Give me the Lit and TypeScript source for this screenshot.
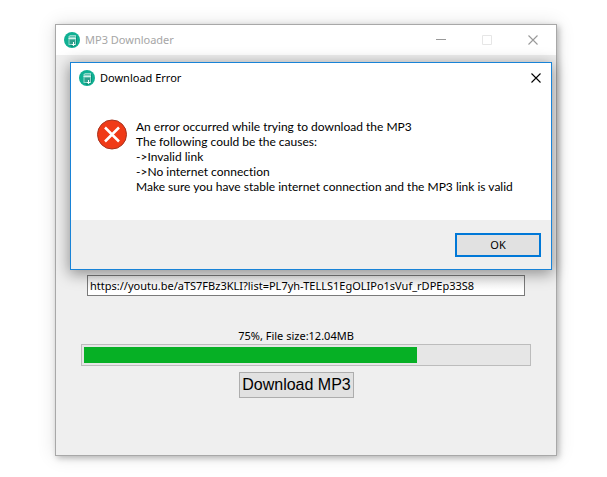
import { LitElement, html, css, svg } from "lit";
import { customElement, property } from "lit/decorators.js";

const cross = svg`<path d="M.5 .5 L9.5 9.5 M9.5 .5 L.5 9.5" stroke="currentColor" stroke-width="1.1" fill="none"/>`;

@customElement("app-logo")
class AppLogo extends LitElement {
  static styles = css`
    :host { display: block; width: 16px; height: 16px; }
    svg { display: block; }
  `;
  render() {
    return html`<svg width="16" height="16" viewBox="0 0 16 16" aria-hidden="true">
      <circle cx="8" cy="8" r="8" fill="#10b093"/>
      <path d="M5 12 L7.500 15 Q11 15.500 13 12 V5 L11 3z" fill="#0b9079"/>
      <path d="M6 3 H12 V13 H4.500 V4.500z" fill="#8fd9cb"/>
      <path d="M6 4.500 H11" stroke="#5fbfae"/>
      <path d="M5.500 7.500 H11 V12 H5.500z" fill="#2f9e8b"/>
      <path d="M4.500 6.500 H12" stroke="#d5f2ec"/>
      <path d="M9.500 10 V13.500" stroke="#fff"/>
      <path d="M7.500 12 H11.500 L9.500 14z" fill="#fff"/>
    </svg>`;
  }
}

@customElement("error-dialog")
class ErrorDialog extends LitElement {
  @property({ type: Array }) lines: string[] = [];

  static styles = css`
    :host {
      display: block;
      box-sizing: border-box;
      border: 1px solid #1883d7;
      background: #fff;
      color: #000;
      box-shadow: 0 3px 14px 1px rgba(0, 0, 0, 0.4);
    }
    .bar { display: flex; align-items: center; gap: 5px; height: 29px; padding: 0 10px 0 8px; }
    .title { flex: 1; margin: 0; font-size: 11px; font-weight: 400; line-height: 16px; }
    button { font: inherit; color: inherit; margin: 0; }
    .close { display: flex; padding: 0; border: 0; background: none; }
    .content { display: flex; align-items: flex-start; gap: 8px; padding: 27px 26px 26px; }
    .icon { flex: none; }
    .message {
      margin: 0; white-space: nowrap;
      font: 12px/15px Lato, "Open Sans", sans-serif;
      font-variant-ligatures: none;
    }
    .line { display: block; }
    .footer { display: flex; justify-content: flex-end; padding: 13px 10px 12px; background: #efefef; }
    .ok {
      width: 86px; height: 24px; padding: 0;
      border: 2px solid #0078d7; background: #e1e1e1;
    }
  `;
  render() {
    return html`
      <header class="bar">
        <app-logo></app-logo>
        <h2 class="title">Download Error</h2>
        <button class="close" aria-label="Close">
          <svg width="10" height="10" viewBox="0 0 10 10">${cross}</svg>
        </button>
      </header>
      <div class="content">
        <svg class="icon" width="31" height="31" viewBox="0 0 31 31" aria-hidden="true">
          <circle cx="15" cy="15.500" r="14.500" fill="#f03a17" stroke="#a6341f"/>
          <path d="M8 8.500 L22 22.500 M22 8.500 L8 22.500" stroke="#fff" stroke-width="2.500"/>
        </svg>
        <p class="message">${this.lines.map((l) => html`<span class="line">${l}</span>`)}</p>
      </div>
      <footer class="footer"><button class="ok">OK</button></footer>
    `;
  }
}

@customElement("app-root")
class AppRoot extends LitElement {
  @property({ type: Number }) progress = 75;

  static styles = css`
    :host {
      display: block;
      padding: 24px 50px 21px 55px;
      background: #fff;
      font: 11px/16px "Noto Sans", "Open Sans", sans-serif;
      color: #000;
    }
    .window {
      position: relative;
      border: 1px solid #a8a8a8;
      background: #efefef;
      box-shadow: 2px 2px 6px rgba(0, 0, 0, 0.25), 0 0 18px rgba(0, 0, 0, 0.12);
    }
    .bar {
      display: flex; align-items: center; gap: 5px;
      height: 30px; padding: 0 18px 0 8px;
      background: #fff; color: #999;
    }
    .title { flex: 1; margin: 0; font-size: 11px; font-weight: 400; line-height: 16px; color: #a6a6a6; }
    .controls { display: flex; gap: 36px; }
    .control { display: flex; padding: 0; border: 0; background: none; color: inherit; }
    .control:disabled { color: #e6e6e6; }
    .body { display: flex; flex-direction: column; padding: 220px 25px 57px; }
    .url {
      box-sizing: border-box; height: 21px; margin: 0 6px; padding: 0 2px;
      border: 1px solid #7a7a7a; border-radius: 0; outline: 0;
      background: linear-gradient(#ececec, #fff 14px); color: #000; font: inherit;
    }
    .status { margin: 32px 20px 0 0; text-align: center; }
    .track {
      height: 16px; padding: 2px; border: 1px solid #bcbcbc; background: #e6e6e6;
    }
    .fill { height: 100%; background: #06b025; }
    .download {
      align-self: center; height: 26px; margin: 6px 19px 0 0; padding: 0 2px;
      border: 1px solid #adadad; background: #e1e1e1; color: #000;
      font: 16px/24px "Liberation Sans", Arial, sans-serif;
    }
    .dialog { position: absolute; top: 37px; left: 14px; right: 4px; }
  `;

  render() {
    return html`
      <main class="window">
        <header class="bar">
          <app-logo></app-logo>
          <h1 class="title">MP3 Downloader</h1>
          <div class="controls">
            <button class="control" aria-label="Minimize">
              <svg width="10" height="10" viewBox="0 0 10 10"><path d="M0 4.500 H10" stroke="currentColor"/></svg>
            </button>
            <button class="control" aria-label="Maximize" disabled>
              <svg width="10" height="10" viewBox="0 0 10 10"><path d="M.5 .5 H9.500 V9.500 H.5z" fill="none" stroke="currentColor"/></svg>
            </button>
            <button class="control" aria-label="Close">
              <svg width="10" height="10" viewBox="0 0 10 10">${cross}</svg>
            </button>
          </div>
        </header>
        <div class="body">
          <input class="url" type="text" aria-label="Video link"
            .value=${"https://youtu.be/aTS7FBz3KLI?list=PL7yh-TELLS1EgOLIPo1sVuf_rDPEp33S8"} />
          <div class="status" id="status">${this.progress}%, File size:12.04MB</div>
          <div class="track" role="progressbar" aria-labelledby="status"
            aria-valuemin="0" aria-valuemax="100" aria-valuenow=${this.progress}>
            <div class="fill" style="width:${this.progress}%"></div>
          </div>
          <button class="download">Download MP3</button>
        </div>
        <error-dialog class="dialog" role="alertdialog" aria-label="Download Error"
          .lines=${[
            "An error occurred while trying to download the MP3",
            "The following could be the causes:",
            "->Invalid link",
            "->No internet connection",
            "Make sure you have stable internet connection and the MP3 link is valid",
          ]}></error-dialog>
      </main>
    `;
  }
}
